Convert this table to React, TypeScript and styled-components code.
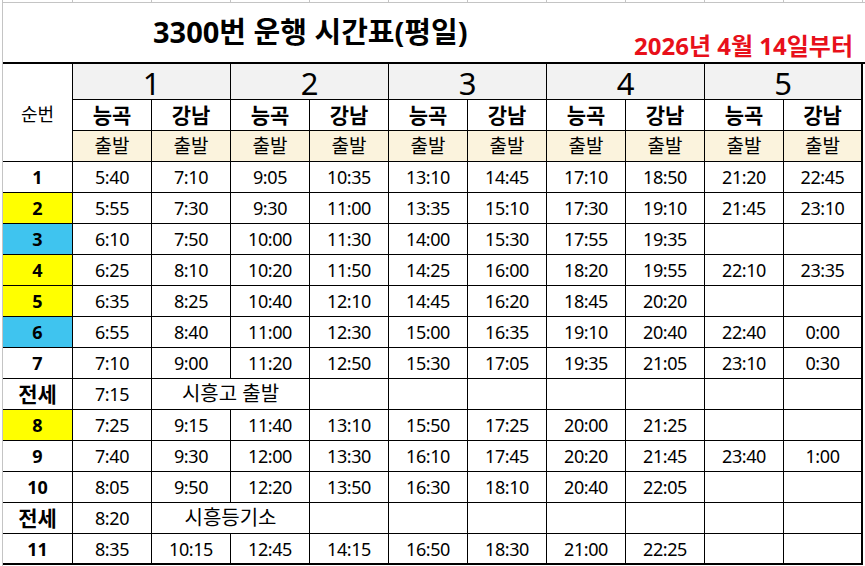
import React from 'react';
import styled, { createGlobalStyle } from 'styled-components';

const GlobalStyle = createGlobalStyle`
  html, body { margin: 0; padding: 0; background: #ffffff; }
  body { font-family: "Noto Sans", "Noto Sans CJK KR", sans-serif; color: #000000; }
  * { box-sizing: border-box; }
`;

const COLS = '70px repeat(10, 79px)';

const Page = styled.div`
  width: 865px;
  height: 566px;
  padding-left: 2px;
  overflow: hidden;
`;

const Sheet = styled.div`
  height: 100%;
  border-left: 1px solid #c4c4c4;
  display: flex;
  flex-direction: column;
`;

const TopStrip = styled.div`
  display: grid;
  grid-template-columns: ${COLS};
  height: 3px;
  border-bottom: 1px solid #c4c4c4;
`;

const Tick = styled.div`
  border-right: 1px solid #c4c4c4;
`;

const TitleBar = styled.div`
  height: 59px;
  display: flex;
  justify-content: space-between;
  padding: 0 12px 0 150px;
`;

const Title = styled.h1`
  margin: 14px 0 0;
  font-size: 29px;
  line-height: 29px;
  font-weight: 700;
  white-space: nowrap;
`;

const Effective = styled.div`
  align-self: flex-end;
  margin-bottom: 4px;
  color: #e8101a;
  font-size: 24px;
  line-height: 24px;
  font-weight: 700;
  white-space: nowrap;
`;

const Timetable = styled.div`
  display: grid;
  grid-template-columns: ${COLS};
  grid-template-rows: 36px repeat(15, 31px);
  border-top: 2px solid #000000;
`;

const Cell = styled.div<{ $edge?: boolean; $foot?: boolean }>`
  display: flex;
  align-items: center;
  justify-content: center;
  white-space: nowrap;
  background: #ffffff;
  border-right: ${(p) => (p.$edge ? 2 : 1)}px solid #000000;
  border-bottom: ${(p) => (p.$foot ? 2 : 1)}px solid #000000;
  font-size: 18px;
  line-height: 1;
`;

const CornerCell = styled(Cell)`
  grid-row: span 3;
  font-size: 18px;
  padding-top: 2px;
`;

const GroupCell = styled(Cell)`
  grid-column: span 2;
  background: #f2f2f2;
  font-size: 31px;
  padding-top: 3px;
`;

const StopCell = styled(Cell)`
  font-size: 21px;
  font-weight: 700;
`;

const DepartCell = styled(Cell)`
  background: #fbf3dd;
  font-size: 19px;
`;

const NoCell = styled(Cell)<{ $tone?: string; $hangul?: boolean }>`
  background: ${(p) => p.$tone ?? '#ffffff'};
  font-weight: 700;
  font-size: ${(p) => (p.$hangul ? 21 : 18)}px;
`;

const TimeCell = styled(Cell)`
  font-size: 18px;
  letter-spacing: -0.4px;
`;

const NoteCell = styled(Cell)`
  grid-column: span 2;
  font-size: 20px;
`;

const YELLOW = '#ffff00';
const BLUE = '#3fc4ef';

type Row = { no: string; tone?: string; times: string[]; note?: string };

const rows: Row[] = [
  { no: '1', times: ['5:40', '7:10', '9:05', '10:35', '13:10', '14:45', '17:10', '18:50', '21:20', '22:45'] },
  { no: '2', tone: YELLOW, times: ['5:55', '7:30', '9:30', '11:00', '13:35', '15:10', '17:30', '19:10', '21:45', '23:10'] },
  { no: '3', tone: BLUE, times: ['6:10', '7:50', '10:00', '11:30', '14:00', '15:30', '17:55', '19:35', '', ''] },
  { no: '4', tone: YELLOW, times: ['6:25', '8:10', '10:20', '11:50', '14:25', '16:00', '18:20', '19:55', '22:10', '23:35'] },
  { no: '5', tone: YELLOW, times: ['6:35', '8:25', '10:40', '12:10', '14:45', '16:20', '18:45', '20:20', '', ''] },
  { no: '6', tone: BLUE, times: ['6:55', '8:40', '11:00', '12:30', '15:00', '16:35', '19:10', '20:40', '22:40', '0:00'] },
  { no: '7', times: ['7:10', '9:00', '11:20', '12:50', '15:30', '17:05', '19:35', '21:05', '23:10', '0:30'] },
  { no: '전세', times: ['7:15'], note: '시흥고 출발' },
  { no: '8', tone: YELLOW, times: ['7:25', '9:15', '11:40', '13:10', '15:50', '17:25', '20:00', '21:25', '', ''] },
  { no: '9', times: ['7:40', '9:30', '12:00', '13:30', '16:10', '17:45', '20:20', '21:45', '23:40', '1:00'] },
  { no: '10', times: ['8:05', '9:50', '12:20', '13:50', '16:30', '18:10', '20:40', '22:05', '', ''] },
  { no: '전세', times: ['8:20'], note: '시흥등기소' },
  { no: '11', times: ['8:35', '10:15', '12:45', '14:15', '16:50', '18:30', '21:00', '22:25', '', ''] },
];

const groups = ['1', '2', '3', '4', '5'];
const stops = ['능곡', '강남'];

export default function App() {
  const lastIndex = rows.length - 1;
  return (
    <>
      <GlobalStyle />
      <Page>
        <Sheet>
          <TopStrip>
            {Array.from({ length: 11 }).map((_, i) => (
              <Tick key={i} />
            ))}
          </TopStrip>
          <TitleBar>
            <Title>3300번 운행 시간표(평일)</Title>
            <Effective>2026년 4월 14일부터</Effective>
          </TitleBar>
          <Timetable>
            <CornerCell>순번</CornerCell>
            {groups.map((g, i) => (
              <GroupCell key={g} $edge={i === groups.length - 1}>
                {g}
              </GroupCell>
            ))}
            {groups.map((g, gi) =>
              stops.map((s, si) => (
                <StopCell key={`${g}-${s}`} $edge={gi === groups.length - 1 && si === 1}>
                  {s}
                </StopCell>
              ))
            )}
            {groups.map((g, gi) =>
              stops.map((s, si) => (
                <DepartCell key={`d-${g}-${s}`} $edge={gi === groups.length - 1 && si === 1}>
                  출발
                </DepartCell>
              ))
            )}
            {rows.map((r, ri) => {
              const foot = ri === lastIndex;
              const cells: React.ReactNode[] = [];
              if (r.note) {
                cells.push(
                  <TimeCell key="t0" $foot={foot}>
                    {r.times[0]}
                  </TimeCell>
                );
                cells.push(
                  <NoteCell key="note" $foot={foot}>
                    {r.note}
                  </NoteCell>
                );
                for (let c = 3; c < 10; c++) {
                  cells.push(<TimeCell key={`e${c}`} $foot={foot} $edge={c === 9} />);
                }
              } else {
                r.times.forEach((t, ci) => {
                  cells.push(
                    <TimeCell key={`t${ci}`} $foot={foot} $edge={ci === 9}>
                      {t}
                    </TimeCell>
                  );
                });
              }
              return (
                <React.Fragment key={ri}>
                  <NoCell $tone={r.tone} $hangul={!!r.note} $foot={foot}>
                    {r.no}
                  </NoCell>
                  {cells}
                </React.Fragment>
              );
            })}
          </Timetable>
        </Sheet>
      </Page>
    </>
  );
}
